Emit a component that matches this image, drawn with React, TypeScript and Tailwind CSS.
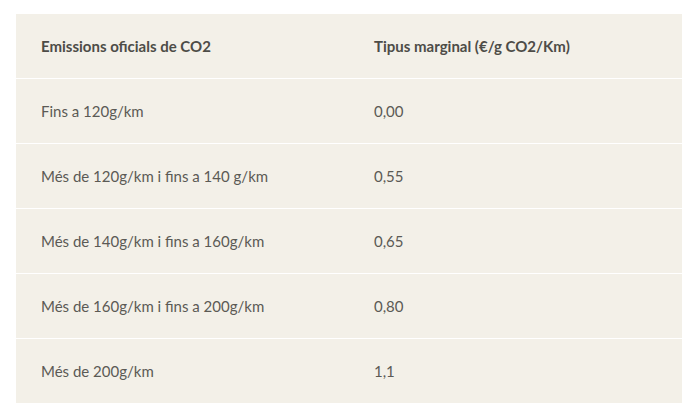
const rows: [string, string][] = [
  ['Fins a 120g/km', '0,00'],
  ['Més de 120g/km i fins a 140 g/km', '0,55'],
  ['Més de 140g/km i fins a 160g/km', '0,65'],
  ['Més de 160g/km i fins a 200g/km', '0,80'],
  ['Més de 200g/km', '1,1'],
];

export default function App() {
  return (
    <div className="min-h-screen bg-white pt-[14px] pl-[16px] font-['Lato',sans-serif]">
      <div className="w-[666px] flex flex-col gap-px bg-white">
        <div className="grid grid-cols-[358px_1fr] h-[64px] items-center bg-[#f3f0e8] text-[15px] font-bold text-[#4d4c47]">
          <div className="pl-[25px]">Emissions oficials de CO2</div>
          <div>Tipus marginal (€/g CO2/Km)</div>
        </div>
        {rows.map(([a, b]) => (
          <div
            key={a}
            className="grid grid-cols-[358px_1fr] h-[64px] items-center bg-[#f3f0e8] text-[15px] text-[#5b5a55]"
          >
            <div className="pl-[25px]">{a}</div>
            <div>{b}</div>
          </div>
        ))}
      </div>
    </div>
  );
}
